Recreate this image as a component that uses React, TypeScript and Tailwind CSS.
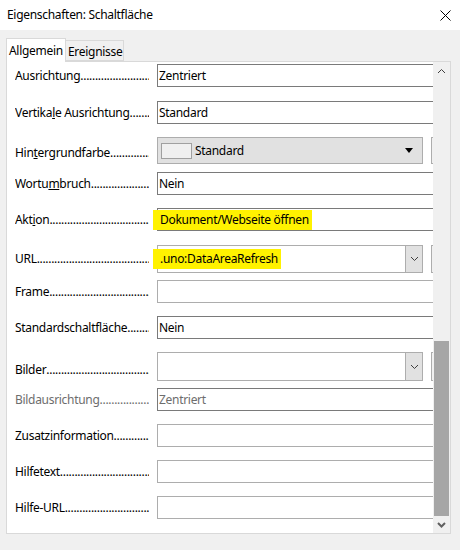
import React from 'react';

const DOTS = '.'.repeat(80);

const Label: React.FC<{ children: React.ReactNode; disabled?: boolean; className?: string }> = ({ children, disabled, className = '' }) => (
    <div className={`flex w-[134px] shrink-0 whitespace-nowrap overflow-hidden leading-[16px] ${disabled ? 'text-[#6d6d6d]' : 'text-black'} ${className}`}>
        <span>{children}</span>
        <span className="flex-1 min-w-0 overflow-hidden">{DOTS}</span>
    </div>
);

const TextField: React.FC<{ value?: React.ReactNode; dark?: boolean; disabled?: boolean }> = ({ value, dark, disabled }) => (
    <div className={`h-[23px] w-[300px] shrink-0 flex items-center pl-[1px] bg-white border ${dark ? 'border-[#7a7a7a]' : 'border-[#adadad]'} ${disabled ? 'text-[#6d6d6d]' : 'text-black'}`}>
        {value}
    </div>
);

const Marked: React.FC<{ children: React.ReactNode }> = ({ children }) => (
    <span className="h-[20px] flex items-center bg-[#fff200] -ml-[6px] pl-[7px] pr-[3px]">{children}</span>
);

const Chevron: React.FC<{ up?: boolean; bold?: boolean }> = ({ up, bold }) => (
    <svg width="9" height="6" viewBox="0 0 9 6" className={up ? 'rotate-180' : ''}>
        <path d="M1 1 L4.5 4.5 L8 1" fill="none" stroke={bold ? '#606060' : '#404040'} strokeWidth={bold ? 2 : 1} />
    </svg>
);

const SideStub: React.FC<{ h: string }> = ({ h }) => (
    <div className={`${h} w-[20px] shrink-0 ml-[8px] border border-[#adadad] bg-[#f0f0f0]`} />
);

const DropList: React.FC<{ h: string; value?: React.ReactNode }> = ({ h, value }) => (
    <div className="flex shrink-0">
        <div className={`${h} w-[266px] flex bg-white border border-[#adadad]`}>
            <div className="flex-1 flex items-center pl-[1px]">{value}</div>
            <div className="w-[17px] h-full bg-[#e1e1e1] border-l border-[#adadad] flex items-center justify-center">
                <Chevron />
            </div>
        </div>
        <SideStub h={h} />
    </div>
);

const ColorList: React.FC = () => (
    <div className="flex shrink-0">
        <div className="h-[27px] w-[266px] flex items-center bg-[#e1e1e1] border border-[#adadad]">
            <div className="ml-[3px] w-[31px] h-[16px] bg-[#f0f0f0] border border-[#a0a0a0]" />
            <span className="ml-[3px] flex-1">Standard</span>
            <svg width="8" height="5" viewBox="0 0 8 5" className="mr-[9px]">
                <path d="M0 0 H8 L4 5 Z" fill="#000" />
            </svg>
        </div>
        <SideStub h="h-[27px]" />
    </div>
);

const Row: React.FC<{ className: string; children: React.ReactNode }> = ({ className, children }) => (
    <div className={`flex items-center pl-[8px] ${className}`}>{children}</div>
);

const App: React.FC = () => {
    return (
        <div className="w-[460px] h-[550px] bg-[#f0f0f0] text-[12px] leading-[16px] tracking-[-0.3px] font-['Noto_Sans',sans-serif] overflow-hidden">
            <div className="h-[30px] bg-white flex items-center justify-between pl-[7px] pr-[9px]">
                <span>Eigenschaften: Schaltfläche</span>
                <svg width="11" height="11" viewBox="0 0 11 11">
                    <path d="M0.5 0.5 L10.5 10.5 M10.5 0.5 L0.5 10.5" stroke="#000" strokeWidth="1" />
                </svg>
            </div>

            <div className="flex items-end pl-[6px] pt-[8px]">
                <div className="relative z-10 h-[24px] w-[60px] bg-white border border-b-0 border-[#d9d9d9] pl-[2px] pt-[4px] -mb-[1px] whitespace-nowrap">Allgemein</div>
                <div className="h-[21px] w-[58px] bg-[#f0f0f0] border border-l-0 border-[#d9d9d9] pl-[2px] pt-[3px] whitespace-nowrap">Ereignisse</div>
            </div>

            <div className="ml-[6px] w-[445px] h-[473px] bg-white border border-[#d9d9d9] flex">
                <div className="flex-1 min-w-0 overflow-hidden flex flex-col">
                    <Row className="mt-[2px]">
                        <Label>Ausrichtung</Label>
                        <div className="ml-[8px]"><TextField dark value="Zentriert" /></div>
                    </Row>
                    <Row className="mt-[14px]">
                        <Label>Vertika<u>l</u>e Ausrichtung</Label>
                        <div className="ml-[8px]"><TextField dark value="Standard" /></div>
                    </Row>
                    <Row className="mt-[13px]">
                        <Label className="pt-[5px]">Hin<u>t</u>ergrundfarbe</Label>
                        <div className="ml-[8px]"><ColorList /></div>
                    </Row>
                    <Row className="mt-[8px]">
                        <Label>Wortu<u>m</u>bruch</Label>
                        <div className="ml-[8px]"><TextField dark value="Nein" /></div>
                    </Row>
                    <Row className="mt-[13px]">
                        <Label>Akt<u>i</u>on</Label>
                        <div className="ml-[8px]"><TextField dark value={<Marked>Dokument/Webseite öffnen</Marked>} /></div>
                    </Row>
                    <Row className="mt-[14px]">
                        <Label>URL</Label>
                        <div className="ml-[8px]"><DropList h="h-[28px]" value={<Marked>.uno:DataAreaRefresh</Marked>} /></div>
                    </Row>
                    <Row className="mt-[7px]">
                        <Label>Frame</Label>
                        <div className="ml-[8px]"><TextField /></div>
                    </Row>
                    <Row className="mt-[13px]">
                        <Label>Standardschaltfläche</Label>
                        <div className="ml-[8px]"><TextField dark value="Nein" /></div>
                    </Row>
                    <Row className="mt-[13px]">
                        <Label className="pt-[7px]">Bilder</Label>
                        <div className="ml-[8px]"><DropList h="h-[29px]" /></div>
                    </Row>
                    <Row className="mt-[7px]">
                        <Label disabled>Bildausrichtung</Label>
                        <div className="ml-[8px]"><TextField dark disabled value="Zentriert" /></div>
                    </Row>
                    <Row className="mt-[13px]">
                        <Label>Zusatzinformation</Label>
                        <div className="ml-[8px]"><TextField /></div>
                    </Row>
                    <Row className="mt-[13px]">
                        <Label>Hilfetext</Label>
                        <div className="ml-[8px]"><TextField /></div>
                    </Row>
                    <Row className="mt-[13px]">
                        <Label>Hilfe-URL</Label>
                        <div className="ml-[8px]"><TextField /></div>
                    </Row>
                </div>

                <div className="w-[17px] shrink-0 bg-[#f0f0f0] flex flex-col">
                    <div className="h-[17px] flex items-center justify-center"><Chevron up /></div>
                    <div className="flex-1 flex flex-col justify-end px-[1px]">
                        <div className="h-[175px] bg-[#a6a6a6]" />
                    </div>
                    <div className="h-[17px] flex items-center justify-center"><Chevron bold /></div>
                </div>
            </div>
        </div>
    );
};

export default App;
